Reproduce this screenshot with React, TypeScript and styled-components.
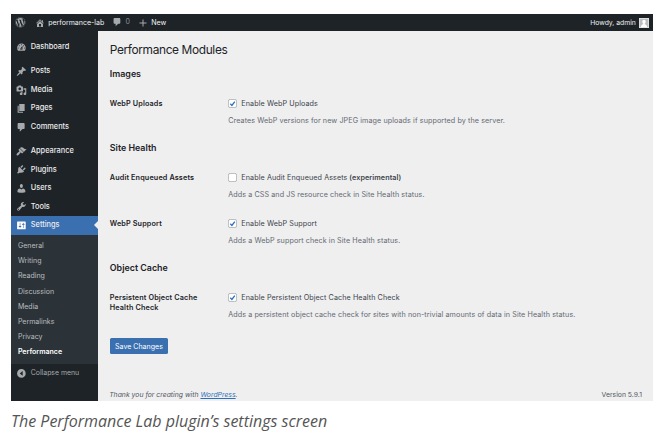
import React from "react";
import styled, { createGlobalStyle } from "styled-components";
import { FaWordpress } from "react-icons/fa";

const GlobalStyle = createGlobalStyle`
  body { margin: 0; background: #fff; }
  * { box-sizing: border-box; }
`;

const icons = {
  home: "M16 8.5l1.53 1.53-1.06 1.06L10 4.6l-6.47 6.49-1.06-1.06L10 2.5l4 4v-2h2v4zm-6-2.46l6 5.99V18H4v-5.97zM12 17v-5H8v5h4z",
  plus: "M17 9v2h-6v6H9v-6H3V9h6V3h2v6h6z",
  dashboard:
    "M3.76 16h12.48c1.1-1.37 1.76-3.11 1.76-5 0-4.42-3.58-8-8-8s-8 3.58-8 8c0 1.89.66 3.63 1.76 5zM10 4c.55 0 1 .45 1 1s-.45 1-1 1-1-.45-1-1 .45-1 1-1zM6 6c.55 0 1 .45 1 1s-.45 1-1 1-1-.45-1-1 .45-1 1-1zm8 0c.55 0 1 .45 1 1s-.45 1-1 1-1-.45-1-1 .45-1 1-1zm-5.37 5.55L12 7v6c0 1.1-.9 2-2 2s-2-.9-2-2c0-.57.24-1.08.63-1.45zM4 10c.55 0 1 .45 1 1s-.45 1-1 1-1-.45-1-1 .45-1 1-1zm12 0c.55 0 1 .45 1 1s-.45 1-1 1-1-.45-1-1 .45-1 1-1zm-5 3c0-.55-.45-1-1-1s-1 .45-1 1 .45 1 1 1 1-.45 1-1z",
  post: "M10.44 3.02l1.82-1.82 6.36 6.35-1.83 1.82c-1.05-.68-2.48-.57-3.41.36l-.75.75c-.92.93-1.04 2.35-.35 3.41l-1.83 1.82-2.41-2.41-2.8 2.79c-.42.42-3.38 2.71-3.8 2.29s1.86-3.39 2.28-3.81l2.79-2.79L4.1 9.36l1.83-1.82c1.05.69 2.48.57 3.4-.36l.75-.75c.93-.92 1.05-2.35.36-3.41z",
  media:
    "M13 11V4c0-.55-.45-1-1-1h-1.67L9 1H5L3.67 3H2c-.55 0-1 .45-1 1v7c0 .55.45 1 1 1h10c.55 0 1-.45 1-1zM7 4.5c1.38 0 2.5 1.12 2.5 2.5S8.38 9.5 7 9.5 4.5 8.38 4.5 7 5.62 4.5 7 4.5zM14 6h5v10.5c0 1.38-1.12 2.5-2.5 2.5S14 17.88 14 16.5s1.12-2.5 2.5-2.5c.17 0 .34.02.5.05V9h-3V6zm-4 8.05V13h2v3.5c0 1.38-1.12 2.5-2.5 2.5S7 17.88 7 16.5 8.12 14 9.5 14c.17 0 .34.02.5.05z",
  page: "M6 15V2h10v13H6zm-1 1h8v2H3V5h2v11z",
  comment:
    "M5 2h9c1.1 0 2 .9 2 2v7c0 1.1-.9 2-2 2h-2l-5 5v-5H5c-1.1 0-2-.9-2-2V4c0-1.1.9-2 2-2z",
  appearance:
    "M14.48 11.06L7.41 3.99l1.5-1.5c.5-.56 2.3-.47 3.51.32 1.21.8 1.43 1.28 2.91 2.1 1.18.64 2.45 1.26 4.45.85zm-.71.71L6.7 4.7 4.93 6.47c-.39.39-.39 1.02 0 1.41l1.06 1.06c.39.39.39 1.03 0 1.42-.6.6-1.43 1.11-2.21 1.69-.35.26-.7.53-1.01.84C1.43 14.23.4 16.08 1.4 17.07c.99 1 2.84-.03 4.18-1.36.31-.31.58-.66.85-1.02.57-.78 1.08-1.61 1.69-2.21.39-.39 1.02-.39 1.41 0l1.06 1.06c.39.39 1.02.39 1.41 0z",
  plugins:
    "M13.11 4.36L9.87 7.6 8 5.73l3.24-3.24c.35-.34 1.05-.2 1.56.32.52.51.66 1.21.31 1.55zm-8 1.77l.91-1.12 9.01 9.01-1.19.84c-.71.71-2.63 1.16-3.82 1.16H6.14L4.9 17.26c-.59.59-1.54.59-2.12 0-.59-.58-.59-1.53 0-2.12l1.24-1.24v-3.88c0-1.13.4-3.19 1.09-3.89zm7.26 3.97l3.24-3.24c.34-.35 1.04-.21 1.55.31.52.51.66 1.21.31 1.55l-3.24 3.25z",
  users:
    "M10 9.25c-2.27 0-2.73-3.44-2.73-3.44C7 4.02 7.82 2 9.97 2c2.16 0 2.98 2.02 2.71 3.81 0 0-.41 3.44-2.68 3.44zm0 2.57L12.72 10c2.39 0 4.52 2.33 4.52 4.53v2.49s-3.65 1.13-7.24 1.13c-3.65 0-7.24-1.13-7.24-1.13v-2.49c0-2.25 1.94-4.48 4.47-4.48z",
  tools:
    "M16.68 9.77c-1.34 1.34-3.3 1.67-4.95.99l-5.41 6.52c-.99.99-2.59.99-3.58 0s-.99-2.59 0-3.57l6.52-5.42c-.68-1.65-.35-3.61.99-4.95 1.28-1.28 3.12-1.62 4.72-1.06l-2.89 2.89 2.82 2.82 2.86-2.87c.53 1.58.18 3.39-1.08 4.65zM3.81 16.21c.4.39 1.04.39 1.43 0 .4-.4.4-1.04 0-1.43-.39-.4-1.03-.4-1.43 0-.39.39-.39 1.03 0 1.43z",
  settings:
    "M18 16V4c0-.55-.45-1-1-1H3c-.55 0-1 .45-1 1v12c0 .55.45 1 1 1h14c.55 0 1-.45 1-1zM8 11h1c.55 0 1 .45 1 1s-.45 1-1 1H8v1.5c0 .28-.22.5-.5.5s-.5-.22-.5-.5V13H6c-.55 0-1-.45-1-1s.45-1 1-1h1V5.5c0-.28.22-.5.5-.5s.5.22.5.5V11zm5-2h-1c-.55 0-1-.45-1-1s.45-1 1-1h1V5.5c0-.28.22-.5.5-.5s.5.22.5.5V7h1c.55 0 1 .45 1 1s-.45 1-1 1h-1v5.5c0 .28-.22.5-.5.5s-.5-.22-.5-.5V9z",
  collapse: "M10 2a8 8 0 1 0 0 16 8 8 0 0 0 0-16zM12.4 14.4V5.6L7 10z",
};

type IconName = keyof typeof icons;

const Glyph = styled.svg<{ $size: number }>`
  display: block;
  flex: none;
  width: ${(p) => p.$size}px;
  height: ${(p) => p.$size}px;
  fill: currentColor;
  fill-rule: evenodd;
`;

const Icon = ({ name, size = 10.8 }: { name: IconName; size?: number }) => (
  <Glyph viewBox="0 0 20 20" $size={size} aria-hidden>
    <path d={icons[name]} />
  </Glyph>
);

const Figure = styled.figure`
  margin: 0;
  padding: 14px 17px 0 11px;
  width: 670px;
  height: 443px;
`;

const Screen = styled.div`
  display: flex;
  flex-direction: column;
  width: 642px;
  height: 387px;
  overflow: hidden;
  background: #efeff0;
  font-family: Inter, "Liberation Sans", sans-serif;
  font-size: 7.04px;
  color: #3c434a;
`;

const AdminBar = styled.header`
  display: flex;
  align-items: center;
  flex: none;
  height: 17px;
  padding: 0 4px 0 4.4px;
  background: #1d2327;
  color: #a7aaad;
  font-size: 7.04px;
`;

const BarItem = styled.div<{ $gap: number; $after?: number }>`
  display: flex;
  align-items: center;
  gap: ${(p) => p.$gap}px;
  margin-right: ${(p) => p.$after ?? 0}px;
`;

const BarLabel = styled.span<{ $dim?: boolean }>`
  color: ${(p) => (p.$dim ? "#8c8f94" : "#f0f0f1")};
  white-space: nowrap;
  line-height: 10px;
`;

const Account = styled(BarItem)`
  margin-left: auto;
  font-size: 6.8px;
`;

const Avatar = styled.svg`
  display: block;
  width: 10px;
  height: 10px;
`;

const Body = styled.div`
  display: flex;
  flex: 1;
  min-height: 0;
`;

const Sidebar = styled.nav`
  display: flex;
  flex-direction: column;
  flex: none;
  width: 86.6px;
  padding-top: 6.8px;
  background: #1d2327;
`;

const MenuItem = styled.a<{ $active?: boolean; $spaced?: boolean }>`
  position: relative;
  display: flex;
  align-items: center;
  gap: 4.2px;
  height: 18.5px;
  margin-top: ${(p) => (p.$spaced ? 5.9 : 0)}px;
  padding-left: 4.8px;
  background: ${(p) => (p.$active ? "#3a6fb0" : "transparent")};
  color: ${(p) => (p.$active ? "#fff" : "#a7aaad")};
  font-size: 7.4px;
`;

const MenuLabel = styled.span`
  color: #ececed;
  font-weight: 500;
  line-height: 10px;
  white-space: nowrap;
`;

const Pointer = styled.i`
  position: absolute;
  right: 0;
  top: 4.9px;
  border: solid transparent;
  border-width: 4.3px 4.3px 4.3px 0;
  border-right-color: #efeff0;
`;

const Submenu = styled.div`
  display: flex;
  flex-direction: column;
  padding: 3.3px 0 4.4px;
  background: #2c3338;
`;

const SubItem = styled.a<{ $current?: boolean }>`
  height: 15.22px;
  padding-left: 6.9px;
  line-height: 15.2px;
  color: ${(p) => (p.$current ? "#fff" : "#b9bcbf")};
  font-size: 7.04px;
  font-weight: ${(p) => (p.$current ? 600 : 400)};
`;

const Collapse = styled.a`
  display: flex;
  align-items: center;
  gap: 4.2px;
  height: 18.4px;
  padding-left: 4.8px;
  color: #a7aaad;
  font-size: 6.9px;
  line-height: 10px;
`;

const Main = styled.main`
  display: flex;
  flex-direction: column;
  flex: 1;
  min-width: 0;
  padding: 10.6px 11px 0 12.2px;
`;

const Title = styled.h1`
  margin: 0;
  height: 16px;
  font-size: 11.9px;
  letter-spacing: -0.36px;
  font-weight: 400;
  line-height: 16px;
  color: #1d2327;
`;

const SectionTitle = styled.h2`
  margin: 0;
  height: 12px;
  font-size: 8.9px;
  font-weight: 600;
  line-height: 12px;
  color: #1d2327;
`;

const Section = styled.section<{ $top: number }>`
  margin-top: ${(p) => p.$top}px;
`;

const Rows = styled.div`
  display: grid;
  gap: 20px;
  padding-top: 19px;
`;

const Row = styled.div`
  display: grid;
  grid-template-columns: 118.4px 1fr;
  height: 26px;
`;

const RowTitle = styled.div`
  max-width: 96px;
  font-size: 7.25px;
  letter-spacing: 0.13px;
  font-weight: 600;
  line-height: 10px;
  color: #1d2327;
`;

const Field = styled.div`
  display: flex;
  flex-direction: column;
  gap: 7px;
  font-size: 7.2px;
  letter-spacing: 0.083px;
`;

const Option = styled.label`
  display: flex;
  align-items: flex-start;
  gap: 4.2px;
  height: 10px;
  line-height: 10px;
  white-space: nowrap;
`;

const Strong = styled.strong`
  font-weight: 600;
`;

const CheckMark = styled.svg`
  display: block;
  flex: none;
  width: 9px;
  height: 9px;
  fill: none;
`;

const Checkbox = ({ checked }: { checked: boolean }) => (
  <CheckMark viewBox="0 0 9 9" aria-hidden>
    <rect x="0.4" y="0.4" width="8.2" height="8.2" rx="1.8" fill="#fff" stroke="#9a9da2" strokeWidth="0.7" />
    {checked && <path d="M2.3 4.8L3.9 6.4L6.8 2.6" stroke="#2f6fc0" strokeWidth="1.3" />}
  </CheckMark>
);

const Description = styled.p`
  margin: 0;
  line-height: 10px;
  color: #646970;
  white-space: nowrap;
`;

const SaveButton = styled.button`
  align-self: flex-start;
  width: 58.4px;
  height: 16px;
  margin-top: 19px;
  padding: 0;
  border: 0;
  border-radius: 1.6px;
  background: #3a6fb0;
  color: #fff;
  font: 400 7.04px/17px Inter, "Liberation Sans", sans-serif;
`;

const Footer = styled.footer`
  display: flex;
  justify-content: space-between;
  margin-top: auto;
  height: 12px;
  line-height: 11px;
  font-size: 6.85px;
  color: #50575e;
`;

const Thanks = styled.span`
  margin-left: -0.6px;
  font-style: italic;
`;

const Link = styled.a`
  color: #2f6fb5;
  text-decoration: underline;
`;

const Caption = styled.figcaption`
  margin-top: 9px;
  color: #555;
  font: italic 400 16px/22px "Open Sans", sans-serif;
  white-space: nowrap;
`;

const menu: { icon: IconName; label: string; spaced?: boolean; active?: boolean }[] = [
  { icon: "dashboard", label: "Dashboard" },
  { icon: "post", label: "Posts", spaced: true },
  { icon: "media", label: "Media" },
  { icon: "page", label: "Pages" },
  { icon: "comment", label: "Comments" },
  { icon: "appearance", label: "Appearance", spaced: true },
  { icon: "plugins", label: "Plugins" },
  { icon: "users", label: "Users" },
  { icon: "tools", label: "Tools" },
  { icon: "settings", label: "Settings", active: true },
];

const submenu = ["General", "Writing", "Reading", "Discussion", "Media", "Permalinks", "Privacy", "Performance"];

interface Module {
  title: string;
  option: string;
  note?: string;
  description: string;
  checked: boolean;
}

const sections: { title: string; top: number; modules: Module[] }[] = [
  {
    title: "Images",
    top: 10.4,
    modules: [
      {
        title: "WebP Uploads",
        option: "Enable WebP Uploads",
        description: "Creates WebP versions for new JPEG image uploads if supported by the server.",
        checked: true,
      },
    ],
  },
  {
    title: "Site Health",
    top: 17,
    modules: [
      {
        title: "Audit Enqueued Assets",
        option: "Enable Audit Enqueued Assets",
        note: "(experimental)",
        description: "Adds a CSS and JS resource check in Site Health status.",
        checked: false,
      },
      {
        title: "WebP Support",
        option: "Enable WebP Support",
        description: "Adds a WebP support check in Site Health status.",
        checked: true,
      },
    ],
  },
  {
    title: "Object Cache",
    top: 17,
    modules: [
      {
        title: "Persistent Object Cache Health Check",
        option: "Enable Persistent Object Cache Health Check",
        description:
          "Adds a persistent object cache check for sites with non-trivial amounts of data in Site Health status.",
        checked: true,
      },
    ],
  },
];

export default function App() {
  return (
    <Figure>
      <GlobalStyle />
      <Screen>
        <AdminBar>
          <BarItem $gap={0} $after={8.6}>
            <FaWordpress size={10.6} />
          </BarItem>
          <BarItem $gap={3.6} $after={7.4}>
            <Icon name="home" size={10} />
            <BarLabel>performance-lab</BarLabel>
          </BarItem>
          <BarItem $gap={3.4} $after={8.2}>
            <Icon name="comment" size={10.4} />
            <BarLabel $dim>0</BarLabel>
          </BarItem>
          <BarItem $gap={3.2}>
            <Icon name="plus" size={10} />
            <BarLabel>New</BarLabel>
          </BarItem>
          <Account $gap={3.2}>
            <BarLabel>Howdy, admin</BarLabel>
            <Avatar viewBox="0 0 20 20" aria-hidden>
              <rect width="20" height="20" fill="#e8e8e8" />
              <rect x="1.5" y="1.5" width="17" height="17" fill="#bcbdc0" />
              <ellipse cx="10" cy="7.6" rx="3.4" ry="4.2" fill="#fff" />
              <path d="M3.5 18.5c.4-3.7 2.4-5.2 4.8-5.9v-2h3.4v2c2.4.7 4.4 2.2 4.8 5.9z" fill="#fff" />
            </Avatar>
          </Account>
        </AdminBar>
        <Body>
          <Sidebar>
            {menu.map((item) => (
              <MenuItem key={item.label} $active={item.active} $spaced={item.spaced}>
                <Icon name={item.icon} />
                <MenuLabel>{item.label}</MenuLabel>
                {item.active && <Pointer />}
              </MenuItem>
            ))}
            <Submenu>
              {submenu.map((label) => (
                <SubItem key={label} $current={label === "Performance"}>
                  {label}
                </SubItem>
              ))}
            </Submenu>
            <Collapse>
              <Icon name="collapse" />
              Collapse menu
            </Collapse>
          </Sidebar>
          <Main>
            <Title>Performance Modules</Title>
            {sections.map((section) => (
              <Section key={section.title} $top={section.top}>
                <SectionTitle>{section.title}</SectionTitle>
                <Rows>
                  {section.modules.map((m) => (
                    <Row key={m.title}>
                      <RowTitle>{m.title}</RowTitle>
                      <Field>
                        <Option>
                          <Checkbox checked={m.checked} />
                          <span>
                            {m.option}
                            {m.note && <Strong> {m.note}</Strong>}
                          </span>
                        </Option>
                        <Description>{m.description}</Description>
                      </Field>
                    </Row>
                  ))}
                </Rows>
              </Section>
            ))}
            <SaveButton>Save Changes</SaveButton>
            <Footer>
              <Thanks>
                Thank you for creating with <Link>WordPress</Link>.
              </Thanks>
              <span>Version 5.9.1</span>
            </Footer>
          </Main>
        </Body>
      </Screen>
      <Caption>The Performance Lab plugin’s settings screen</Caption>
    </Figure>
  );
}
